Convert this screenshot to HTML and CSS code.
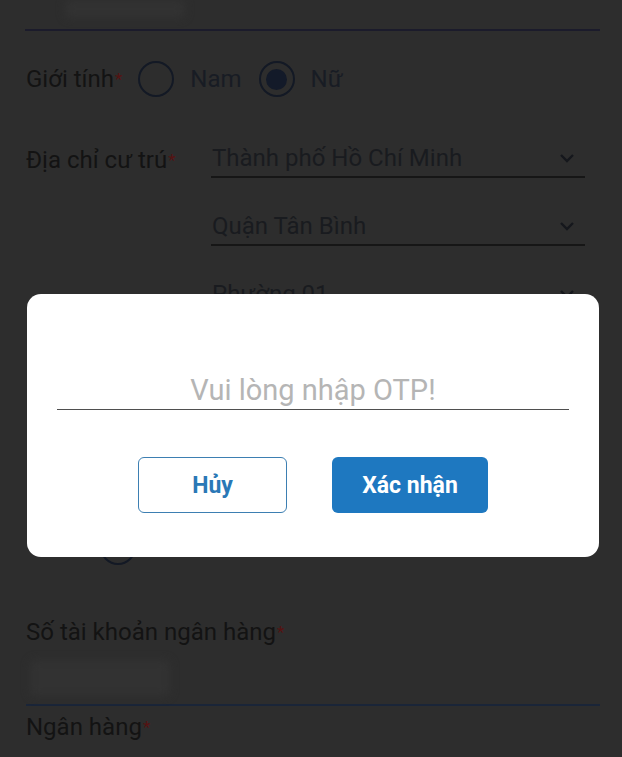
FILE: index.html
```html
<!DOCTYPE html>
<html lang="vi">
<head>
<meta charset="utf-8">
<title>Đăng ký</title>
<link rel="stylesheet" href="styles.css">
</head>
<body>
<main class="form">
  <div class="field-top"><span class="redacted redacted-top"></span></div>

  <div class="gender-row">
    <span class="label">Giới tính<span class="req">*</span></span>
    <span class="radio"></span>
    <span class="opt">Nam</span>
    <span class="radio checked"><span class="dot"></span></span>
    <span class="opt">Nữ</span>
  </div>

  <div class="address-row">
    <span class="label addr-label">Địa chỉ cư trú<span class="req">*</span></span>
    <div class="selects">
      <div class="select"><span>Thành phố Hồ Chí Minh</span><svg class="chev" viewBox="0 0 16 10"><path d="M2 2l6 6 6-6"/></svg></div>
      <div class="select"><span>Quận Tân Bình</span><svg class="chev" viewBox="0 0 16 10"><path d="M2 2l6 6 6-6"/></svg></div>
      <div class="select"><span>Phường 01</span><svg class="chev" viewBox="0 0 16 10"><path d="M2 2l6 6 6-6"/></svg></div>
    </div>
  </div>

  <div class="options">
    <div class="option"><span class="radio"></span></div>
    <div class="option"><span class="radio"></span></div>
  </div>

  <div class="field">
    <span class="label">Số tài khoản ngân hàng<span class="req">*</span></span>
    <div class="input-line"><span class="redacted redacted-acc"></span></div>
  </div>

  <div class="field bank">
    <span class="label">Ngân hàng<span class="req">*</span></span>
  </div>
</main>

<div class="modal">
  <div class="otp-input">Vui lòng nhập OTP!</div>
  <div class="actions">
    <button class="btn btn-outline">Hủy</button>
    <button class="btn btn-primary">Xác nhận</button>
  </div>
</div>
</body>
</html>
```

FILE: styles.css
```css
* { box-sizing: border-box; }

html, body {
  margin: 0;
  background: #2d2d2d;
  height: 757px;
  overflow: hidden;
}

body {
  font-family: Roboto, "Noto Sans", "Liberation Sans", sans-serif;
  color: #131313;
}

.form {
  padding: 0 22px 0 26px;
}

.field-top {
  height: 31px;
  border-bottom: 2px solid #1b1b2b;
  margin-left: -1px;
}

.redacted {
  display: block;
  background: #323232;
  filter: blur(4px);
  border-radius: 6px;
}

.redacted-top {
  width: 120px;
  height: 18px;
  margin-left: 40px;
}

.label {
  display: block;
  font-size: 24px;
  line-height: 28px;
  color: #131313;
  white-space: nowrap;
}

.req {
  color: #561212;
  font-size: 17px;
  vertical-align: top;
  margin-left: 1px;
}

.gender-row {
  display: flex;
  align-items: center;
  margin-top: 30px;
  height: 36px;
}

.radio {
  width: 36px;
  height: 36px;
  border: 2.5px solid #131925;
  border-radius: 50%;
  display: flex;
  align-items: center;
  justify-content: center;
  flex: none;
}

.gender-row .label + .radio { margin-left: 16px; }

.radio .dot {
  width: 21px;
  height: 21px;
  border-radius: 50%;
  background: #131a29;
}

.opt {
  font-size: 24px;
  line-height: 28px;
  color: #181c24;
  margin-left: 16px;
  margin-right: 17px;
}

.address-row {
  display: flex;
  margin-top: 47px;
}

.addr-label {
  width: 185px;
  padding-top: 2px;
}

.selects {
  width: 374px;
  display: flex;
  flex-direction: column;
  gap: 34px;
}

.select {
  display: flex;
  align-items: center;
  justify-content: space-between;
  font-size: 24px;
  line-height: 28px;
  color: #191b1f;
  padding: 0 10px 4px 1px;
  border-bottom: 2px solid #161616;
}

.chev {
  width: 16px;
  height: 10px;
  fill: none;
  stroke: #15171c;
  stroke-width: 2.4;
}

.options {
  margin-top: 155px;
  padding-left: 74px;
  display: flex;
  flex-direction: column;
  gap: 24px;
}

.option {
  display: flex;
  align-items: center;
}

.field {
  margin-top: 53px;
}

.input-line {
  height: 60px;
  border-bottom: 2px solid #1a2538;
  padding-top: 14px;
}

.redacted-acc {
  width: 140px;
  height: 36px;
  margin-left: 4px;
}

.bank {
  margin-top: 7px;
}

.modal {
  position: absolute;
  left: 27px;
  top: 294px;
  width: 572px;
  height: 263px;
  background: #ffffff;
  border-radius: 14px;
  padding: 78px 30px 0;
}

.otp-input {
  height: 38px;
  border-bottom: 1.5px solid #4f4f4f;
  text-align: center;
  font-size: 29px;
  line-height: 36px;
  color: #b5b5b5;
}

.actions {
  display: flex;
  justify-content: center;
  gap: 45px;
  margin-top: 47px;
}

.btn {
  height: 56px;
  border-radius: 6px;
  font-family: Roboto, "Noto Sans", "Liberation Sans", sans-serif;
  font-weight: 700;
  font-size: 23px;
  cursor: pointer;
}

.btn-outline {
  width: 149px;
  background: #ffffff;
  border: 1.5px solid #3d7fb2;
  color: #2a78b6;
}

.btn-primary {
  width: 156px;
  background: #1e78c0;
  border: none;
  color: #ffffff;
}
```
